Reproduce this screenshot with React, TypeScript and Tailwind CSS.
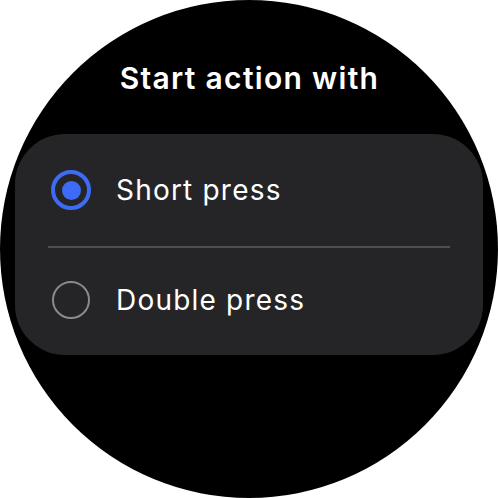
import React from "react";

export default function App() {
  return (
    <div className="w-[498px] h-[498px] bg-white" style={{ fontFamily: "Inter, Roboto, 'Noto Sans', sans-serif" }}>
      <div className="w-full h-full rounded-full bg-black flex flex-col items-center">
        <div className="mt-[63px] pl-[1px] text-white text-[30px] font-semibold leading-[30px] tracking-[1.3px]">
          Start action with
        </div>
        <div className="mt-[41px] w-[468px] h-[221px] bg-[#252527] rounded-[50px] flex flex-col">
          <div className="h-[112px] shrink-0 flex items-center pl-[36px]">
            <div className="w-[40px] h-[40px] shrink-0 rounded-full border-[4px] border-[#3e6bf6] flex items-center justify-center">
              <div className="w-[19px] h-[19px] rounded-full bg-[#3e6bf6]" />
            </div>
            <span className="ml-[25px] text-white text-[28px] leading-none tracking-[1.2px]">Short press</span>
          </div>
          <div className="mx-[33px] h-[2px] shrink-0 bg-[#4f4f52]" />
          <div className="flex-1 flex items-center pl-[37px] pb-[3px]">
            <div className="w-[38px] h-[38px] shrink-0 rounded-full border-[2.5px] border-[#8a8a8a]" />
            <span className="ml-[26px] text-white text-[28px] leading-none tracking-[1.2px]">Double press</span>
          </div>
        </div>
      </div>
    </div>
  );
}
